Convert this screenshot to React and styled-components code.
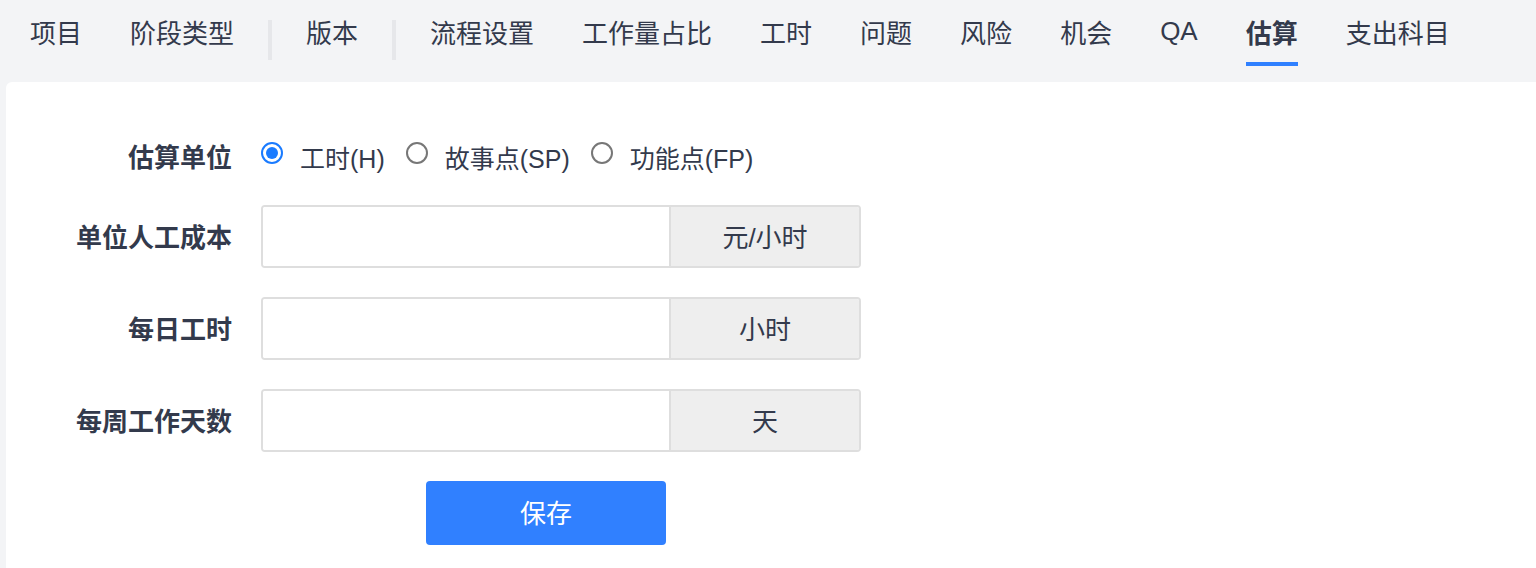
import React, { useState } from 'react';
import styled, { createGlobalStyle } from 'styled-components';

const GlobalStyle = createGlobalStyle`
  html, body {
    margin: 0;
    padding: 0;
    background: #f3f4f6;
    font-family: "Liberation Sans", "Noto Sans CJK SC", sans-serif;
    color: #333a4c;
  }
`;

const Page = styled.div`
  width: 1536px;
  height: 568px;
  overflow: hidden;
  background: #f3f4f6;
`;

// Top tab bar
const TabBar = styled.nav`
  display: flex;
  align-items: center;
  height: 82px;
  padding-left: 6px;
  box-sizing: border-box;
`;

const Tab = styled.div`
  position: relative;
  padding: 0 24px 19px;
  height: 82px;
  display: flex;
  align-items: center;
  box-sizing: border-box;
  font-size: 26px;
  font-weight: ${(p) => (p.$active ? 700 : 400)};
  color: #333a4c;
  white-space: nowrap;

  &::after {
    content: '';
    display: ${(p) => (p.$active ? 'block' : 'none')};
    position: absolute;
    left: 24px;
    right: 24px;
    top: 62px;
    height: 4px;
    background: #2f80ff;
  }
`;

const Divider = styled.div`
  width: 4px;
  height: 40px;
  margin: 0 10px 2px;
  background: #e6e7ea;
`;

// Content card
const Card = styled.section`
  margin-left: 6px;
  background: #fff;
  border-top-left-radius: 6px;
  height: 486px;
  padding-top: 50px;
  box-sizing: border-box;
`;

const Form = styled.div`
  display: flex;
  flex-direction: column;
`;

const Row = styled.div`
  display: grid;
  grid-template-columns: 226px 600px;
  column-gap: 29px;
  align-items: center;
  margin-bottom: ${(p) => p.$gap || 30}px;
`;

const Label = styled.label`
  text-align: right;
  font-size: 26px;
  font-weight: 700;
  color: #333a4c;
  margin-top: -3px;
`;

const RadioGroup = styled.div`
  display: flex;
  align-items: center;
  height: 50px;
  gap: 21px;
`;

const RadioItem = styled.label`
  display: flex;
  align-items: center;
  gap: 17px;
  font-size: 25px;
  color: #333a4c;
  cursor: pointer;
`;

const RadioDot = styled.span`
  width: 22px;
  height: 22px;
  border-radius: 50%;
  box-sizing: border-box;
  border: ${(p) => (p.$checked ? '2px solid #1a7bff' : '2px solid #777')};
  background: #fff;
  display: flex;
  align-items: center;
  justify-content: center;
  margin-top: -8px;

  &::after {
    content: '';
    display: ${(p) => (p.$checked ? 'block' : 'none')};
    width: 12px;
    height: 12px;
    border-radius: 50%;
    background: #1a7bff;
  }
`;

const InputGroup = styled.div`
  display: flex;
  width: 600px;
  height: 63px;
  border: 2px solid #dedede;
  border-radius: 4px;
  box-sizing: border-box;
  overflow: hidden;
`;

const Input = styled.input`
  flex: 1;
  border: none;
  outline: none;
  padding: 0 14px;
  font-size: 24px;
  font-family: inherit;
  background: #fff;
`;

const Addon = styled.div`
  width: 188px;
  border-left: 2px solid #dedede;
  background: #eeeeee;
  display: flex;
  align-items: center;
  justify-content: center;
  padding-bottom: 3px;
  font-size: 26px;
  color: #333a4c;
`;

const Button = styled.button`
  margin-left: 165px;
  width: 240px;
  height: 64px;
  border: none;
  border-radius: 4px;
  background: #3080ff;
  color: #fff;
  font-size: 26px;
  font-family: inherit;
  padding-bottom: 4px;
  cursor: pointer;
`;

const tabs = ['项目', '阶段类型', '|', '版本', '|', '流程设置', '工作量占比', '工时', '问题', '风险', '机会', 'QA', '估算', '支出科目'];

const units = [
  { key: 'H', text: '工时(H)' },
  { key: 'SP', text: '故事点(SP)' },
  { key: 'FP', text: '功能点(FP)' },
];

const fields = [
  { label: '单位人工成本', addon: '元/小时' },
  { label: '每日工时', addon: '小时' },
  { label: '每周工作天数', addon: '天' },
];

export default function App() {
  const [unit, setUnit] = useState('H');

  return (
    <Page>
      <GlobalStyle />
      <TabBar>
        {tabs.map((t, i) =>
          t === '|' ? <Divider key={i} /> : <Tab key={i} $active={t === '估算'}>{t}</Tab>
        )}
      </TabBar>
      <Card>
        <Form>
          <Row $gap={23}>
            <Label>估算单位</Label>
            <RadioGroup>
              {units.map((u) => (
                <RadioItem key={u.key} onClick={() => setUnit(u.key)}>
                  <RadioDot $checked={unit === u.key} />
                  {u.text}
                </RadioItem>
              ))}
            </RadioGroup>
          </Row>
          {fields.map((f) => (
            <Row key={f.label} $gap={29}>
              <Label>{f.label}</Label>
              <InputGroup>
                <Input />
                <Addon>{f.addon}</Addon>
              </InputGroup>
            </Row>
          ))}
          <Row>
            <span />
            <Button>保存</Button>
          </Row>
        </Form>
      </Card>
    </Page>
  );
}
